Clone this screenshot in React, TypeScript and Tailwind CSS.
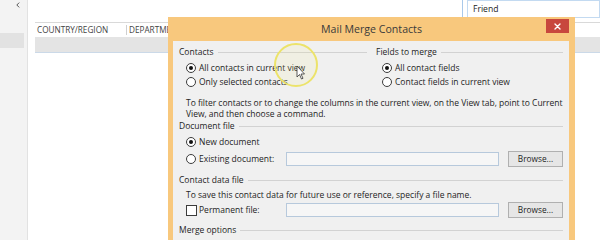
import React from 'react';

const font = "font-['Open_Sans','Noto_Sans',sans-serif]";

const GroupHeader: React.FC<{ label: string }> = ({ label }) => (
  <div className="h-[12px] flex items-center gap-[4px]">
    <span className="text-[8.5px] leading-none text-[#1e1e1e] whitespace-nowrap">{label}</span>
    <div className="flex-1 h-px bg-[#d2d2d2]" />
  </div>
);

const Radio: React.FC<{ checked?: boolean }> = ({ checked }) => (
  <div className="w-[10px] h-[10px] shrink-0 rounded-full border border-[#3c3c3c] bg-white flex items-center justify-center">
    {checked && <div className="w-[4px] h-[4px] rounded-full bg-[#111]" />}
  </div>
);

const RadioRow: React.FC<{ label: string; checked?: boolean }> = ({ label, checked }) => (
  <div className="h-[14px] flex items-center gap-[3px]">
    <Radio checked={checked} />
    <span className="text-[8.5px] leading-none text-[#1e1e1e] whitespace-nowrap">{label}</span>
  </div>
);

const FileField: React.FC = () => (
  <div className="w-[213px] h-[14px] bg-[#f6f6f6] border border-[#b7c9dc]" />
);

const BrowseButton: React.FC = () => (
  <div className="w-[55px] h-[16px] bg-[#e6e6e6] border border-[#b0b0b0] flex items-center justify-center text-[8.3px] leading-none text-[#1e1e1e]">
    Browse...
  </div>
);

const MailMergeDialog: React.FC = () => (
  <div className="absolute left-[168px] top-[17px] w-[407px] h-[240px] bg-[#f8c87d] flex flex-col">
    {/* title bar */}
    <div className="relative h-[24px] shrink-0 flex items-center justify-center">
      <span className="text-[10.6px] leading-none text-[#3a3a3a] pt-[1px]">Mail Merge Contacts</span>
      <div className="absolute right-[6px] top-[2px] w-[23px] h-[14px] bg-[#c8473d] flex items-center justify-center">
        <svg width="7" height="7" viewBox="0 0 7 7">
          <path d="M1 1L6 6M6 1L1 6" stroke="#fff" strokeWidth="1.4" strokeLinecap="round" />
        </svg>
      </div>
    </div>

    {/* client area */}
    <div className="flex-1 ml-[5px] mr-[6px] bg-[#f0f0f0] px-[6px] pt-[5px] flex flex-col">
      <div className="grid grid-cols-[188px_187px] gap-x-[9px]">
        <div className="flex flex-col">
          <GroupHeader label="Contacts" />
          <div className="pl-[7px] mt-[3px]">
            <RadioRow label="All contacts in current view" checked />
            <RadioRow label="Only selected contacts" />
          </div>
        </div>
        <div className="flex flex-col">
          <GroupHeader label="Fields to merge" />
          <div className="pl-[6px] mt-[3px]">
            <RadioRow label="All contact fields" checked />
            <RadioRow label="Contact fields in current view" />
          </div>
        </div>
      </div>

      <p className="mt-[8px] pl-[7px] text-[8.5px] leading-[11px] tracking-[-0.03px] text-[#1e1e1e] whitespace-nowrap">
        To filter contacts or to change the columns in the current view, on the View tab, point to Current
        <br />
        View, and then choose a command.
      </p>

      <div className="mt-[1px]">
        <GroupHeader label="Document file" />
      </div>
      <div className="pl-[7px] mt-[3px]">
        <RadioRow label="New document" checked />
      </div>
      <div className="pl-[7px] mt-[2px] h-[16px] flex items-center">
        <div className="w-[100px] flex items-center gap-[3px]">
          <Radio />
          <span className="text-[8.5px] leading-none text-[#1e1e1e] whitespace-nowrap">Existing document:</span>
        </div>
        <FileField />
        <div className="ml-[9px]">
          <BrowseButton />
        </div>
      </div>

      <div className="mt-[7px]">
        <GroupHeader label="Contact data file" />
      </div>
      <p className="mt-[3px] pl-[7px] h-[12px] flex items-center text-[8.5px] leading-none text-[#1e1e1e] whitespace-nowrap">
        To save this contact data for future use or reference, specify a file name.
      </p>
      <div className="pl-[7px] mt-[1px] h-[16px] flex items-center">
        <div className="w-[100px] flex items-center gap-[2px]">
          <div className="w-[11px] h-[11px] shrink-0 border border-[#3c3c3c] bg-white" />
          <span className="text-[8.5px] leading-none text-[#1e1e1e] whitespace-nowrap">Permanent file:</span>
        </div>
        <FileField />
        <div className="ml-[9px]">
          <BrowseButton />
        </div>
      </div>

      <div className="mt-[6px]">
        <GroupHeader label="Merge options" />
      </div>
    </div>
  </div>
);

const App: React.FC = () => {
  return (
    <div className={`relative w-[600px] h-[240px] overflow-hidden bg-white ${font}`}>
      <div className="flex h-full">
        {/* left nav strip */}
        <aside className="w-[28px] shrink-0 bg-[#f3f3f3] border-r border-[#e2e2e2] flex flex-col">
          <div className="h-[33px] flex justify-end items-start pr-[7px] pt-[2px]">
            <svg width="4" height="6" viewBox="0 0 4 6">
              <path d="M3.2 0.6L0.8 3L3.2 5.4" stroke="#555" strokeWidth="1" fill="none" />
            </svg>
          </div>
          <div className="h-[15px] w-[24px] bg-[#e2e2e2]" />
        </aside>

        {/* contact list view */}
        <main className="flex-1 flex flex-col pl-[7px]">
          <div className="h-[22px] flex justify-end">
            <div className="w-[138px] border-l border-[#a9c9ea] pl-[4px]">
              <div className="h-[18px] border border-[#c3daf1] bg-white pl-[5px] flex items-center text-[8.6px] text-[#222]">
                Friend
              </div>
            </div>
          </div>
          <div className="h-[15px] flex border-t border-[#d9d9d9]">
            <div className="flex-1 flex items-center text-[8.2px] text-[#444] leading-none">
              <span className="pl-[2px] w-[91px]">COUNTRY/REGION</span>
              <span className="h-[10px] w-px bg-[#cfcfcf]" />
              <span className="pl-[2px]">DEPARTMENT</span>
            </div>
            <div className="w-[138px] border-l border-[#a9c9ea]" />
          </div>
          <div className="h-[16px] bg-[#e4e4e4] border-b border-[#cbd9e8]" />
          <div className="flex-1 bg-white" />
        </main>
      </div>

      <MailMergeDialog />

      {/* cursor highlight */}
      <svg className="absolute left-[272px] top-[41px] pointer-events-none" width="50" height="50" viewBox="0 0 50 50">
        <circle cx="24" cy="24" r="21" fill="rgba(250,240,140,0.12)" stroke="#ece36a" strokeWidth="2" />
        <path d="M25 25L25 36L27.5 33.5L29.5 38L31 37.3L29 33L32.5 33Z" fill="#fff" stroke="#333" strokeWidth="0.8" strokeLinejoin="round" />
      </svg>
    </div>
  );
};

export default App;
